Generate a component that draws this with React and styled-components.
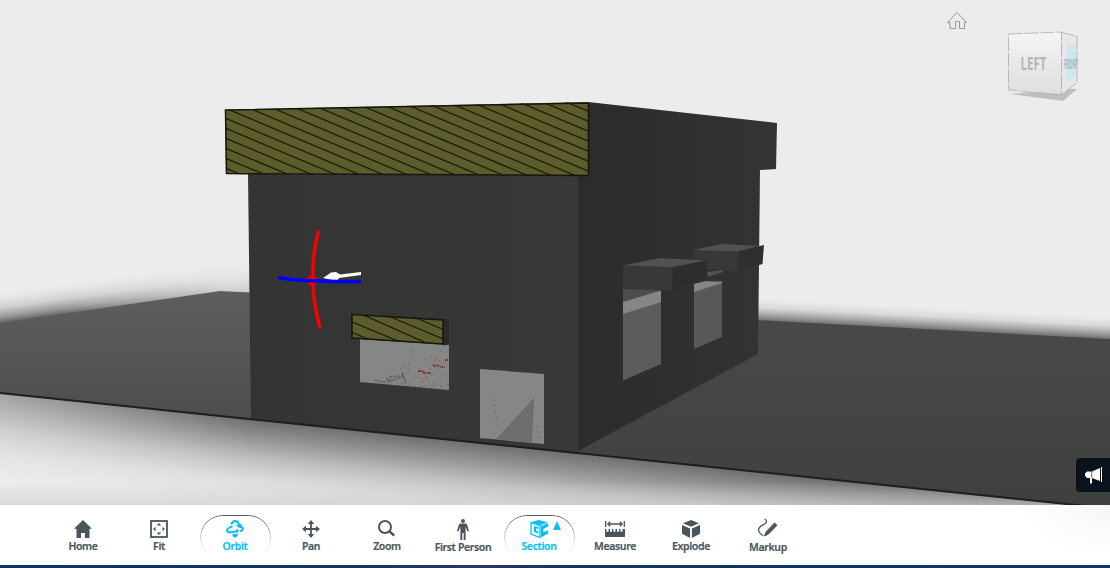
import React from "react";
import styled, { createGlobalStyle, css } from "styled-components";

const GlobalStyle = createGlobalStyle`
  * { box-sizing: border-box; }
  body { margin: 0; background: #fff; overflow: hidden; font-family: "Noto Sans", "Open Sans", sans-serif; }
  button { font-family: inherit; }
`;
const Page = styled.div`
  display: flex;
  flex-direction: column;
  width: 1110px;
  height: 568px;
  overflow: hidden;
`;
const Viewer = styled.main`
  position: relative;
  height: 505px;
  flex: none;
  background: #ececec;
`;
const Scene = styled.svg`
  display: block;
  width: 1110px;
  height: 505px;
`;
const Feedback = styled.button`
  position: absolute;
  right: 0;
  top: 458px;
  width: 34px;
  height: 34px;
  padding: 0 0 0 1px;
  border: 0;
  border-radius: 4px 0 0 4px;
  background: #0a121c;
  display: flex;
  align-items: center;
  justify-content: center;
`;
const Toolbar = styled.nav`
  display: flex;
  flex: none;
  height: 60px;
  padding: 10px 0 0 45px;
  background: radial-gradient(ellipse 90px 50px at 1110px 0, #f6f6f6, #fff);
`;
const Tool = styled.button`
  width: 76px;
  height: 45px;
  padding: 0;
  border: 0;
  background: none;
  display: flex;
  justify-content: center;
  color: ${(p) => (p.$active ? "#06bff5" : "#4a555b")};
  &:last-child { width: 78px; }
`;
const ToolFace = styled.span`
  position: relative;
  width: 71px;
  height: 45px;
  padding-top: ${(p) => p.$top}px;
  display: flex;
  flex-direction: column;
  align-items: center;
  ${(p) => p.$active && css`
    &::before {
      content: "";
      position: absolute;
      inset: 0;
      border: 1px solid #555;
      border-radius: 24px;
      mask-image: linear-gradient(#000, #0004 55%, transparent 85%);
    }
  `}
`;
const ToolIcon = styled.svg`
  display: block;
  flex: none;
  overflow: visible;
`;
const Label = styled.span`
  font-family: "Noto Sans", "Open Sans", sans-serif;
  font-size: 10.5px;
  font-weight: 600;
  line-height: 14px;
  white-space: nowrap;
  color: ${(p) => (p.$active ? "#06bff5" : "#4a555b")};
  letter-spacing: -0.35px;
  -webkit-text-stroke: 0.2px currentColor;
`;
const Footer = styled.footer`
  height: 3px;
  background: linear-gradient(90deg, #0c3562, #12365f 33%, #2b3566 42%, #12365f 52%, #0e3462);
`;

const line = { fill: "none", stroke: "currentColor" };
const icons = {
  home: <path d="M9 0 18 8.700h-2.500V18H11v-5H7v5H2.500V8.700H0z" fill="currentColor" />,
  fit: <g><rect x="1" y="1" width="16" height="16" {...line} strokeWidth="1.8" /><path d="m9 3 2.3 2.5H6.700zM9 15l2.300-2.500H6.700zM3 9l2.500-2.300v4.600zM15 9l-2.500-2.300v4.600z" fill="currentColor" /></g>,
  orbit: (
    <g {...line} strokeWidth="2">
      <path d="M5.300 4.500C6 2.300 7.500 1 9.200 1c2.200 0 3.500 2 4 4.500" />
      <path d="m10 5.200 5.800-1.500-.6 4.800z" fill="currentColor" stroke="none" />
      <path d="M6.500 6.400C3 7.400 1 9 1 10.600c0 1.900 3.300 1.900 6.500 1.300l4-1" />
      <path d="m10.200 8.400 2.800 2-2 3z" fill="currentColor" stroke="none" />
      <path d="M12 6.500c3.500 0 5 .7 5 2.100 0 1.200-1.300 2.300-3 3.100" />
      <path d="m5.800 14.600 5-1.100 1.200 1.300-2 2.700H8z" fill="currentColor" stroke="none" />
    </g>
  ),
  pan: <g><path d="M9 2v14M2 9h14" {...line} strokeWidth="1.800" /><path d="m9 0 3.200 4H5.800zM9 18l3.200-4H5.800zM0 9l4-3.200v6.400zM18 9l-4-3.200v6.400z" fill="currentColor" /></g>,
  zoom: <g {...line} strokeWidth="2"><circle cx="7" cy="7" r="6" /><path d="m11.500 11.300 4.700 4.400" strokeWidth="2.500" /></g>,
  person: <g fill="currentColor"><circle cx="6" cy="2" r="2" /><path d="M3 4.500h6l1.200 1.400 1.800 6-1.400.6-2-4.800V21H6.700v-7H5.300v7H3.400V7.700l-2 4.800-1.400-.6 1.800-6z" /></g>,
  section: <g><path d="m1 2.500 9 3.300V17.500L1 14z" {...line} strokeWidth="1.300" /><path d="m1 2 8-2 9 2.400-7.500 2.800zM11 6l7-2.700v3.500l-4.500 2v3.400l4.500-2v3.300l-7 4z" fill="currentColor" /><path d="M8.300 7 4 6v6l4.300 1.500v-2L6 10.600V8.400l2.300.6z" fill="currentColor" /></g>,
  measure: <g><path d="M.7 0v6M19.300 0v6M3 3h14M5.200.8 2.800 3l2.400 2.200M14.800.8 17.200 3l-2.400 2.200" {...line} strokeWidth="1.300" /><path d="M0 8h1.500v2.800h2V8H5v2.800h2V8h1.300v2.800h2.200V8H12v2.800h2V8h1.500v2.800h2V8H20v8H0z" fill="currentColor" /></g>,
  explode: <path d="m9 0 8 3.300-8 3.500-8-3.500zM0 5l8.100 3.600V18L0 13.800zM18 5 9.900 8.600V18l8.100-4.200z" fill="currentColor" />,
  markup: <g><path d="M6.500 0c3.200 1.400 2.300 4.200-.8 5.600C2.500 7 .2 8.600.6 11.700c.4 3.300 4 4.200 4.600 5" {...line} strokeWidth="1.300" /><path d="M16.500 4 19 6.300 10.500 15l-4 2 1.700-4.300z" fill="currentColor" stroke="currentColor" strokeLinejoin="round" /></g>,
};

const tools = [
  { id: "home", label: "Home", w: 18, h: 18 },
  { id: "fit", label: "Fit", w: 18, h: 18 },
  { id: "orbit", label: "Orbit", w: 18, h: 18, active: true },
  { id: "pan", label: "Pan", w: 18, h: 18 },
  { id: "zoom", label: "Zoom", w: 18, h: 17 },
  { id: "person", label: "First Person", w: 12, h: 21, top: 4 },
  { id: "section", label: "Section", w: 18, h: 18, active: true, arrow: true },
  { id: "measure", label: "Measure", w: 20, h: 16, top: 6 },
  { id: "explode", label: "Explode", w: 18, h: 18 },
  { id: "markup", label: "Markup", w: 20, h: 17, top: 4 },
];
const Spacer = styled.span`
  height: ${(p) => p.$h}px;
  flex: none;
`;
const SubmenuArrow = styled.span`
  position: absolute;
  left: 49px;
  top: 6px;
  border: 4.5px solid transparent;
  border-bottom: 9px solid #06bff5;
  border-top: 0;
`;

function ToolButton({ tool }) {
  const top = tool.top ?? 5;
  const labelTop = tool.id === "person" || tool.id === "markup" ? 25 : 24;
  return (
    <Tool $active={tool.active}>
      <ToolFace $active={tool.active} $top={top}>
        <ToolIcon width={tool.w} height={tool.h}>{icons[tool.id]}</ToolIcon>
        <Spacer $h={Math.max(0, labelTop - top - tool.h)} />
        <Label $active={tool.active}>{tool.label}</Label>
        {tool.arrow && <SubmenuArrow />}
      </ToolFace>
    </Tool>
  );
}

function Gradient({ id, x1 = 0, y1, x2 = 0, y2, stops }) {
  return (
    <linearGradient id={id} gradientUnits="userSpaceOnUse" x1={x1} y1={y1} x2={x2} y2={y2}>
      {stops.map(([offset, color, opacity = 1]) => <stop key={offset} offset={offset} stopColor={color} stopOpacity={opacity} />)}
    </linearGradient>
  );
}

function Model() {
  const hatches = Array.from({ length: 33 }, (_, i) => (i - 16) * 23.7);
  return (
    <Scene viewBox="0 0 1110 505">
      <defs>
        <Gradient id="leftGround" y1={290} y2={430} stops={[[0, "#5d5f5d"], [1, "#4b4d4b"]]} />
        <Gradient id="rightGround" y1={320} y2={500} stops={[[0, "#484a48"], [1, "#3f413f"]]} />
        <Gradient id="front" x1={248} x2={579} y1={0} y2={0} stops={[[0, "#333433"], [1, "#373937"]]} />
        <Gradient id="side" x1={579} x2={760} y1={0} y2={0} stops={[[0, "#2a2c2b"], [1, "#323432"]]} />
        <Gradient id="leftHaze" x1={0} y1={323} x2={-4.2} y2={293} stops={[[0, "#666"], [0.2, "#9a9a9a"], [0.5, "#d0d0d0"], [0.8, "#e6e6e6"], [1, "#ececec"]]} />
        <Gradient id="rightHaze" x1={760} y1={320} x2={761.1} y2={299} stops={[[0, "#777"], [0.25, "#a5a5a5"], [0.6, "#dadada"], [1, "#ececec"]]} />
        <Gradient id="under" x1={0} y1={393} x2={-9} y2={480} stops={[[0, "#6f6d6d"], [0.2, "#929191"], [0.45, "#bfbfbf"], [0.7, "#dedede"], [1, "#ececec"]]} />
        <Gradient id="underFade" x1={0} x2={250} y1={0} y2={0} stops={[[0, "#ececec", 0.42], [1, "#ececec", 0]]} />
        <Gradient id="bottom" y1={482} y2={505} stops={[[0, "#ccc", 0], [1, "#ccc", 0.6]]} />
        <Gradient id="hazeFade" x1={60} x2={230} y1={0} y2={0} stops={[[0, "#ececec", 0], [1, "#ececec", 0.8]]} />
        <Gradient id="cube" y1={33} y2={96} stops={[[0, "#f4f4f4"], [1, "#dedede"]]} />
        <clipPath id="roofClip"><path d="m225 110 364-8v74l-363-2z" /></clipPath>
        <clipPath id="canopyClip"><path d="m352 314 91 6v24l-91-6z" /></clipPath>
      </defs>
      <path d="M0 240h260v60L0 330z" fill="url(#leftHaze)" />
      <path d="M0 240h260v60L0 330z" fill="url(#hazeFade)" />
      <path d="M745 290h365v60l-365-18z" fill="url(#rightHaze)" />
      <path d="m0 393 1110 115.500H0z" fill="url(#under)" />
      <path d="m0 393 250 26v86H0z" fill="url(#underFade)" />
      <path d="M0 482h1110v23H0z" fill="url(#bottom)" />
      <path d="m0 323 220-32 40 2v127L0 393z" fill="url(#leftGround)" />
      <path d="m757 320 353 19v169.500l-536-55.500z" fill="url(#rightGround)" />
      <path d="m248 174 331 1-1 279-327-35z" fill="url(#front)" />
      <path d="m588 102 189 21-1 46-16 1-2 184-180 97V175h10z" fill="url(#side)" />
      <path d="m0 393 1110 115.500" fill="none" stroke="#1d1e1d" strokeWidth="2" />

      <path d="m225 110 364-8v74l-363-2z" fill="#5c5d2b" />
      <g clipPath="url(#roofClip)" stroke="#20200f" strokeWidth="1.400">
        {hatches.map((x) => <path key={x} d={`m${206 + x} 100 209 88`} />)}
      </g>
      <path d="m225.500 110 363-7v72.500l-362-2z" fill="none" stroke="#151611" strokeWidth="1.500" />

      <path d="m360 339 89 6v45l-89-8z" fill="#858786" />
      <path d="m366 314.500 83 5v25l-6 1V320z" fill="#292b2a" />
      <path d="m352 314 91 6v24l-91-6z" fill="#5c5d2b" />
      <g clipPath="url(#canopyClip)" stroke="#191a10" strokeWidth="1.300">
        <path d="m359 313 71 31.500M350 321l55 23M350 331.500l25 10.500M386 315l62 26M416 318l32 13.500" />
      </g>
      <path d="m352 314.500 91 5.500v24l-91-6z" fill="none" stroke="#151611" strokeWidth="1.500" />
      <g fill="none" stroke="#873b3d" strokeWidth="2">
        <path d="M418 371h5l1 2h7" strokeDasharray="4 1" />
        <path d="m433 366 4-1 3 2h5M445 360h3" strokeDasharray="3 1" />
        <path d="m414 376 31 11m-4-36-19 32m22-9-13 13m17-13v13M430 356l14 7m-19-5 8 7M410 386h34" strokeWidth="1" strokeDasharray="1 4" />
      </g>
      <path d="m375 380 9 2 14-3 6-5M389 377l14-1m-1-4 4 12m-20-6 6 4" fill="none" stroke="#686a69" strokeWidth="2" strokeDasharray="3 1" />
      <path d="m413 350-2 6m-2 13-8 16m26-7 8-4m-26-11-9 6m35-3 4 8" fill="none" stroke="#4a4a4a" strokeDasharray="1 4" />
      <path d="m480 369 64 5v70l-64-6z" fill="#858786" />
      <path d="m534 398-38 41 36 4z" fill="#6c6e6d" />
      <path d="m494 399 3 24m36-23-1 27m5-2 2 14" fill="none" stroke="#686a69" strokeDasharray="2 4" />

      <path d="m623 289 38-3v78l-38 16.500z" fill="#5a5c5b" />
      <path d="m623 288 38-4v7l-38 12z" fill="#4c4e4d" />
      <path d="m623 302 38-11.500V302l-38 12z" fill="#858786" />
      <path d="m694 284 28-3v56l-28 12z" fill="#575958" />
      <path d="m694 284 12-3 16 1v1l-28 9z" fill="#858786" />
      <path d="m707 272 16-2v2l-15 5z" fill="#525453" />
      <path d="m694 250 44 1-1 20-43-3z" fill="#373938" />
      <path d="m738 251 26-6-1.500 19-3.500 1-22 6z" fill="#2e302f" />
      <path d="m694 250 27-6 38 2-21 5.500z" fill="#505251" />
      <path d="m623 265 50 1-1 25-49-2z" fill="#373938" />
      <path d="m673 266 34-6v17l-35 14z" fill="#2b2d2c" />
      <path d="m623 265.500 37-7.500 46 2.500-33 6.500z" fill="#505251" />

      <path d="M318.500 231c-8 30-8.500 60 1.500 97" fill="none" stroke="#fa0000" strokeWidth="3.400" />
      <path d="m312 274 5 4-1 6-4 3-4-3-1-6z" fill="#ee0000" />
      <path d="m323 278 8-5.500 5-.5 4 2.500 21-2.500v3l-22 3-2 3z" fill="#fff" />
      <path d="M278 277.500c22 4 50 4 83 4" fill="none" stroke="#0000fa" strokeWidth="3.400" />

      <path d="M947.500 22.500 957 12.500 966.500 22.500h-2v6h-5v-7h-4v7h-5.500v-6z" fill="none" stroke="#999" />
      <path d="m1010 94 53-5 14 0-14 12z" fill="#bebebe" />
      <path d="m1008 34 53-2v62l-53-4z" fill="url(#cube)" />
      <path d="m1061 32 16 4v47l-16 12z" fill="#e7e7e7" />
      <path d="M1066 45h10v31l-10 5z" fill="#cfe6ef" />
      <path d="m1008.500 34 53-2v63l-53-5zM1061 32.500l16 3.500v47l-16 12" fill="none" stroke="#b8b8b8" strokeDasharray="14 2" />
      <text x="1020.500" y="69.500" textLength="26" lengthAdjust="spacingAndGlyphs" fontFamily="Open Sans, sans-serif" fontWeight="700" fontSize="17" fill="#b4b7b9">LEFT</text>
      <text transform="translate(1064 69) scale(.28 1)" fontFamily="Open Sans, sans-serif" fontWeight="700" fontSize="15" fill="#a5b5be">FRONT</text>
    </Scene>
  );
}

export default function App() {
  return (
    <Page>
      <GlobalStyle />
      <Viewer>
        <Model />
        <Feedback aria-label="Feedback">
          <svg width="17" height="17"><path d="M16 0h1v15h-1zM15 1v13l-8-3v5.500H5V11H2L0 8.500V6.500L2 4.500h5z" fill="#fff" /><path d="M6.700 4v7" stroke="#0a121c" strokeWidth=".6" /></svg>
        </Feedback>
      </Viewer>
      <Toolbar>
        {tools.map((tool) => <ToolButton key={tool.id} tool={tool} />)}
      </Toolbar>
      <Footer />
    </Page>
  );
}
